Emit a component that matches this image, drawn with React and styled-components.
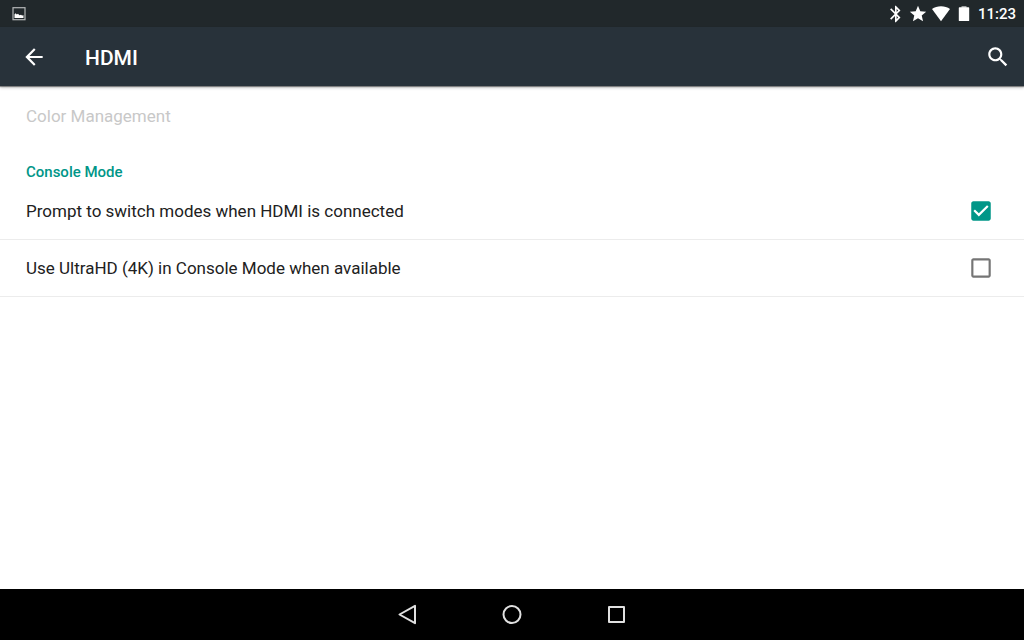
import React, { useState } from 'react';
import styled, { createGlobalStyle } from 'styled-components';


const GlobalStyle = createGlobalStyle`
  * {
    box-sizing: border-box;
  }

  body {
    margin: 0;
    font-family: Roboto, 'Liberation Sans', sans-serif;
    background: #fff;
  }
`;

const App = () => {
  const [prompt, setPrompt] = useState(true);
  const [ultraHd, setUltraHd] = useState(false);

  return (
    <Screen>
      <GlobalStyle />

      <StatusBar>
        <Icon size={14} viewBox="0 0 14 14">
          <rect x="1" y="0.7" width="12" height="12" fill="none" stroke="#b4b7b8" strokeWidth="1.2" />
          <path d="M2.500 11V7.200l1.200-1 1 1.300 1.300-.700 1.500 1.500 1.500-.500 1 .700 1.500-.300V11z" fill="#fff" />
        </Icon>
        <StatusIcons>
          <Icon size={18} viewBox="0 1 22 22">
            <path d="M17.71 7.71L12 2h-1v7.59L6.41 5 5 6.41 10.59 12 5 17.59 6.41 19 11 14.41V22h1l5.71-5.71-4.3-4.29 4.3-4.29zM13 5.83l1.88 1.88L13 9.59V5.83zm1.88 10.46L13 18.17v-3.76l1.88 1.88z" />
          </Icon>
          <Icon size={18} viewBox="1 1 22 22">
            <path d="M12 17.27L18.18 21l-1.64-7.03L22 9.24l-7.19-.61L12 2 9.19 8.63 2 9.24l5.46 4.73L5.82 21z" />
          </Icon>
          <Icon size={18} viewBox="0 0 18 18">
            <path d="M9 16.2L0 4C2.5 2.200 5.600 1.200 9 1.200s6.500 1 9 2.800z" />
          </Icon>
          <Icon size={18} viewBox="0 0 18 18">
            <path d="M6.500 1h5v2h-5z" fill="#9da0a1" />
            <path d="M4.500 2.300h9c.500 0 .700.300.700.700v12.400c0 .400-.200.700-.700.700h-9c-.500 0-.700-.300-.700-.700V3c0-.400.200-.700.700-.700z" />
          </Icon>
          <Clock>11:23</Clock>
        </StatusIcons>
      </StatusBar>

      <AppBar>
        <IconButton aria-label="Navigate up">
          <Icon size={26} viewBox="0 0 24 24">
            <path d="M20 11H7.83l5.59-5.59L12 4l-8 8 8 8 1.41-1.41L7.83 13H20v-2z" />
          </Icon>
        </IconButton>
        <Title>HDMI</Title>
        <IconButton aria-label="Search">
          <Icon size={26} viewBox="0 0 24 24">
            <path d="M15.5 14h-.79l-.28-.27C15.41 12.59 16 11.110 16 9.500 16 5.910 13.090 3 9.500 3S3 5.910 3 9.500 5.910 16 9.500 16c1.610 0 3.090-.590 4.230-1.570l.270.280v.790l5 4.990L20.490 19l-4.990-5zm-6 0C7.010 14 5 11.990 5 9.500S7.010 5 9.500 5 14 7.010 14 9.500 11.990 14 9.500 14z" />
          </Icon>
        </IconButton>
      </AppBar>

      <Content>
        <DisabledItem disabled>Color Management</DisabledItem>
        <Category>Console Mode</Category>
        <CheckSetting
          id="prompt"
          label="Prompt to switch modes when HDMI is connected"
          checked={prompt}
          onChange={setPrompt}
        />
        <CheckSetting
          id="ultrahd"
          label="Use UltraHD (4K) in Console Mode when available"
          checked={ultraHd}
          onChange={setUltraHd}
        />
      </Content>

      <NavBar>
        <NavButton aria-label="Back">
          <NavIcon viewBox="0 0 24 24">
            <path d="M19 2.800v17.400L3.500 11.500z" />
          </NavIcon>
        </NavButton>
        <NavButton aria-label="Home">
          <NavIcon viewBox="0 0 24 24">
            <circle cx="12" cy="11.500" r="8.500" />
          </NavIcon>
        </NavButton>
        <NavButton aria-label="Recent apps">
          <NavIcon viewBox="0 0 24 24">
            <rect x="5" y="4" width="15" height="15" />
          </NavIcon>
        </NavButton>
      </NavBar>
    </Screen>
  );
};

const CheckSetting = ({ id, label, checked, onChange }) => {
  return (
    <Row>
      <RowLabel htmlFor={id}>{label}</RowLabel>
      <CheckWrap>
        <CheckInput
          id={id}
          type="checkbox"
          checked={checked}
          onChange={(e) => onChange(e.target.checked)}
        />
        <CheckIcon size={26} viewBox="0 0 24 24" $checked={checked}>
          {checked ? (
            <path d="M19 3H5c-1.110 0-2 .900-2 2v14c0 1.100.890 2 2 2h14c1.110 0 2-.900 2-2V5c0-1.100-.890-2-2-2zm-9 14l-5-5 1.410-1.410L10 14.170l7.590-7.590L19 8l-9 9z" />
          ) : (
            <path d="M19 5v14H5V5h14m0-2H5c-1.100 0-2 .900-2 2v14c0 1.100.900 2 2 2h14c1.100 0 2-.900 2-2V5c0-1.100-.900-2-2-2z" />
          )}
        </CheckIcon>
      </CheckWrap>
    </Row>
  );
};

// Styled-components

const Screen = styled.div`
  display: flex;
  flex-direction: column;
  min-height: 100vh;
`;

const Icon = styled.svg.attrs(({ size }) => ({
  width: size,
  height: size,
  'aria-hidden': true,
}))`
  display: block;
  flex: none;
  fill: #fff;
`;

const StatusBar = styled.div`
  display: flex;
  align-items: center;
  justify-content: space-between;
  height: 27px;
  padding: 0 8px 0 12px;
  background: #21282b;
`;

const StatusIcons = styled.div`
  display: flex;
  align-items: center;
  gap: 5px;
`;

const Clock = styled.time`
  color: #fff;
  font-size: 15px;
  font-weight: 500;
  line-height: 20px;
`;

const AppBar = styled.header`
  display: flex;
  align-items: center;
  height: 59px;
  padding: 0 13px 0 21px;
  background: #28323a;
  box-shadow: 0 1px 1px rgba(0, 0, 0, 0.4), 0 2px 3px rgba(0, 0, 0, 0.2);
`;

const IconButton = styled.button`
  padding: 0;
  border: none;
  background: none;
  cursor: pointer;
`;

const Title = styled.h1`
  flex: 1;
  margin: 0;
  padding: 2px 0 0 38px;
  color: #fff;
  font-size: 21px;
  font-weight: 500;
  line-height: 28px;
`;

const Content = styled.main`
  flex: 1;
`;

const DisabledItem = styled.button`
  display: block;
  width: 100%;
  padding: 18px 26px 16px;
  border: none;
  background: none;
  color: #c8c8c8;
  font-family: inherit;
  font-size: 17px;
  line-height: 24px;
  text-align: left;
`;

const Category = styled.h2`
  margin: 0;
  padding: 18px 26px 1px;
  color: #009688;
  font-size: 15px;
  font-weight: 500;
  line-height: 20px;
`;

const Row = styled.div`
  display: flex;
  align-items: center;
  padding: 0 30px 0 26px;
  border-bottom: 1px solid #ececec;
`;

const RowLabel = styled.label`
  flex: 1;
  padding: 16px 0;
  color: #212121;
  font-size: 17px;
  line-height: 24px;
`;

const CheckWrap = styled.div`
  display: grid;
`;

const CheckInput = styled.input`
  grid-area: 1 / 1;
  width: 26px;
  height: 26px;
  margin: 0;
  appearance: none;
  cursor: pointer;
`;

const CheckIcon = styled(Icon)`
  grid-area: 1 / 1;
  fill: ${({ $checked }) => ($checked ? '#009688' : '#757575')};
  pointer-events: none;
`;

const NavBar = styled.nav`
  display: flex;
  justify-content: center;
  gap: 56px;
  height: 51px;
  background: #000;
`;

const NavButton = styled.button`
  display: flex;
  align-items: center;
  justify-content: center;
  width: 48px;
  padding: 0;
  border: none;
  background: none;
  cursor: pointer;
`;

const NavIcon = styled.svg`
  width: 24px;
  height: 24px;
  fill: none;
  stroke: #e0e0e0;
  stroke-width: 2;
  stroke-linejoin: round;
`;


export default App;
